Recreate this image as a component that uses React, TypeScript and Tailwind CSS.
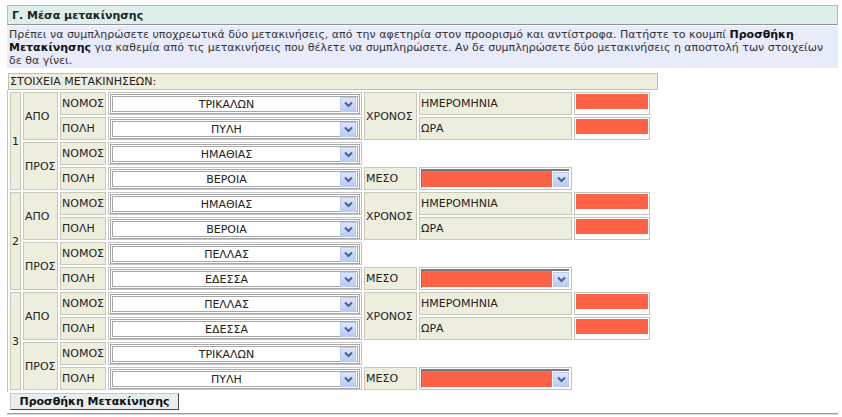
import React from "react";

type Group = { n: number; from: [string, string]; to: [string, string] };

const groups: Group[] = [
  { n: 1, from: ["ΤΡΙΚΑΛΩΝ", "ΠΥΛΗ"], to: ["ΗΜΑΘΙΑΣ", "ΒΕΡΟΙΑ"] },
  { n: 2, from: ["ΗΜΑΘΙΑΣ", "ΒΕΡΟΙΑ"], to: ["ΠΕΛΛΑΣ", "ΕΔΕΣΣΑ"] },
  { n: 3, from: ["ΠΕΛΛΑΣ", "ΕΔΕΣΣΑ"], to: ["ΤΡΙΚΑΛΩΝ", "ΠΥΛΗ"] },
];

const beige = "border border-[#c8c8b8] bg-[#eeeedf] px-[1px] py-0 text-left align-middle h-[23px]";
const plain = "border border-[#c4c4c4] bg-white px-[1px] pt-[1px] pb-0 align-top h-[23px]";

const Arrow = () => (
  <div className="flex h-[15px] w-[16px] items-center justify-center border border-[#b9c9ef] bg-gradient-to-b from-[#dde7fd] to-[#b7cbf6]">
    <svg width="9" height="7" viewBox="0 0 9 7">
      <path d="M1 1.5 L4.5 5 L8 1.5" fill="none" stroke="#4d6185" strokeWidth="2" />
    </svg>
  </div>
);

const Select = ({ value }: { value: string }) => (
  <div className="flex h-[20px] w-[250px] items-center border-[3px] border-double border-[#a6a6a6] bg-white pr-[1px]">
    <span className="flex-1 text-center text-[#222]">{value}</span>
    <Arrow />
  </div>
);

const RedSelect = () => (
  <div className="flex h-[19px] w-[148px] items-center border-t-2 border-l border-[#7a7a7a] bg-white pb-[1px]">
    <div className="h-full flex-1 bg-[#ff6347]" />
    <div className="bg-white pl-[1px]">
      <Arrow />
    </div>
  </div>
);

const RedInput = () => (
  <div className="mb-[5px] h-[15px] w-[72px] bg-[#ff6347]" />
);

const Rows = ({ g }: { g: Group }) => (
  <>
    <tr>
      <td rowSpan={4} className={beige + " w-[10px]"}>
        {g.n}
      </td>
      <td rowSpan={2} className={beige}>ΑΠΟ</td>
      <td className={beige}>ΝΟΜΟΣ</td>
      <td className={plain}>
        <Select value={g.from[0]} />
      </td>
      <td rowSpan={2} className={beige}>ΧΡΟΝΟΣ</td>
      <td className={beige}>ΗΜΕΡΟΜΗΝΙΑ</td>
      <td className={plain}>
        <RedInput />
      </td>
    </tr>
    <tr>
      <td className={beige}>ΠΟΛΗ</td>
      <td className={plain}>
        <Select value={g.from[1]} />
      </td>
      <td className={beige}>ΩΡΑ</td>
      <td className={plain}>
        <RedInput />
      </td>
    </tr>
    <tr>
      <td rowSpan={2} className={beige}>ΠΡΟΣ</td>
      <td className={beige}>ΝΟΜΟΣ</td>
      <td className={plain}>
        <Select value={g.to[0]} />
      </td>
    </tr>
    <tr>
      <td className={beige}>ΠΟΛΗ</td>
      <td className={plain}>
        <Select value={g.to[1]} />
      </td>
      <td className={beige}>ΜΕΣΟ</td>
      <td className={plain}>
        <RedSelect />
      </td>
    </tr>
  </>
);

export default function App() {
  return (
    <div
      className="w-[842px] h-[417px] overflow-hidden bg-white pl-[7px] pr-[4px] pt-[5px] text-[11px] leading-[13px] text-[#222]"
      style={{ fontFamily: '"DejaVu Sans", Verdana, sans-serif' }}
    >
      <div className="flex h-[20px] items-center border border-[#b4bcba] border-b-[#8d9593] bg-[#ddefea] pl-[4px] font-bold">
        Γ. Μέσα μετακίνησης
      </div>
      <div className="mt-[1px] bg-[#e7ebfa] px-[2px] pb-[1px] pt-[2px] text-[#333]">
        Πρέπει να συμπληρώσετε υποχρεωτικά δύο μετακινήσεις, από την αφετηρία στον προορισμό και αντίστροφα. Πατήστε το κουμπί{" "}
        <b className="text-[#111]">Προσθήκη Μετακίνησης</b> για καθεμία από τις μετακινήσεις που θέλετε να συμπληρώσετε. Αν δε
        συμπληρώσετε δύο μετακινήσεις η αποστολή των στοιχείων δε θα γίνει.
      </div>

      <div className="mt-[5px] ml-[1px] flex h-[17px] w-[650px] items-center border border-[#c0c0b0] bg-[#eeeedf] pl-[1px]">
        ΣΤΟΙΧΕΙΑ ΜΕΤΑΚΙΝΗΣΕΩΝ:
      </div>

      <div className="border-l border-[#c4c4c4] w-fit">
        <table className="table-fixed border-separate border-spacing-[2px]">
          <colgroup>
            <col className="w-[10px]" />
            <col className="w-[35px]" />
            <col className="w-[46px]" />
            <col className="w-[254px]" />
            <col className="w-[53px]" />
            <col className="w-[153px]" />
            <col className="w-[76px]" />
          </colgroup>
          <tbody>
            {groups.map((g) => (
              <Rows key={g.n} g={g} />
            ))}
          </tbody>
        </table>
      </div>

      <button className="ml-[3px] mt-[1px] h-[17px] w-[169px] border border-[#c8c8c8] border-b-[#4a4a4a] border-r-[#4a4a4a] bg-[#e6eeee] text-[11px] font-bold leading-none text-[#111]">
        Προσθήκη Μετακίνησης
      </button>

      <div className="mt-[3px] h-[2px] w-[831px] border-t border-[#9a9a9a] bg-[#d8d8d8]" />
    </div>
  );
}
